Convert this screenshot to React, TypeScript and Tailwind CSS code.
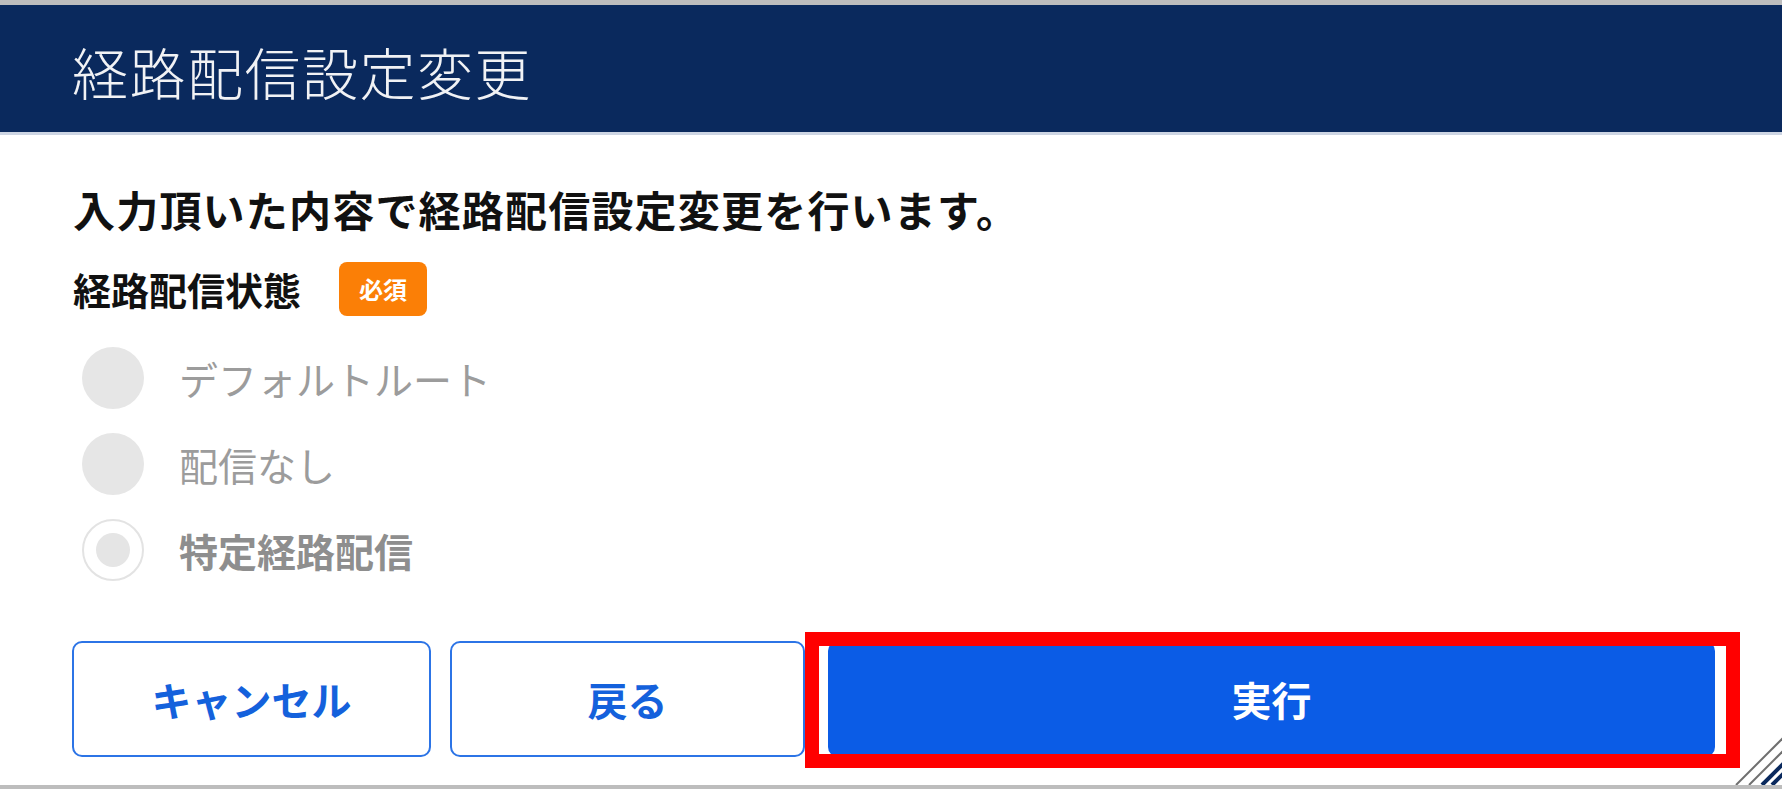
import React from 'react';

const jp = { fontFamily: '"Noto Sans CJK JP", "Noto Sans", sans-serif' };

const options = [
  { label: 'デフォルトルート', checked: false },
  { label: '配信なし', checked: false },
  { label: '特定経路配信', checked: true },
];

function Radio({ label, checked }: { label: string; checked: boolean }) {
  return (
    <div className="flex items-center h-[86px]">
      {checked ? (
        <div className="ml-[9px] w-[62px] h-[62px] rounded-full border-2 border-[#e3e3e3] bg-white flex items-center justify-center">
          <div className="w-[34px] h-[34px] rounded-full bg-[#e5e5e5]" />
        </div>
      ) : (
        <div className="ml-[9px] w-[62px] h-[62px] rounded-full bg-[#e6e6e6]" />
      )}
      <span
        className={`ml-[35px] text-[39px] leading-none ${
          checked ? 'font-bold text-[#8e8e8e]' : 'font-normal text-[#9c9c9c]'
        }`}
      >
        {label}
      </span>
    </div>
  );
}

export default function App() {
  return (
    <div
      className="relative w-full h-[789px] bg-white border-t-[5px] border-b-[4px] border-[#bdbdbd] overflow-hidden"
      style={jp}
    >
      {/* header */}
      <div className="h-[130px] bg-[#0a295d] border-b-[3px] border-[#cdd5e3] flex items-center pl-[72px]">
        <h1 className="mt-[4px] text-[56px] font-light text-[#f1f2f5] leading-none tracking-[1.5px]">
          経路配信設定変更
        </h1>
      </div>

      {/* body */}
      <div className="px-[73px]">
        <p className="mt-[49px] text-[42px] font-bold text-[#111] leading-[50px] tracking-[1.2px]">
          入力頂いた内容で経路配信設定変更を行います。
        </p>

        <div className="mt-[28px] flex items-center">
          <span className="text-[38px] font-bold text-[#111] leading-none">経路配信状態</span>
          <span className="ml-[38px] h-[54px] w-[88px] rounded-[8px] bg-[#fb7f06] text-white text-[24px] font-bold flex items-center justify-center">
            必須
          </span>
        </div>

        <div className="mt-[19px] flex flex-col">
          {options.map((o) => (
            <Radio key={o.label} label={o.label} checked={o.checked} />
          ))}
        </div>
      </div>

      {/* buttons */}
      <div className="absolute left-0 right-0 top-[636px] flex pl-[72px] pr-[67px] gap-[19px]">
        <button className="w-[359px] h-[116px] rounded-[10px] border-2 border-[#2c74e6] bg-white text-[40px] font-bold text-[#1461dc]">
          キャンセル
        </button>
        <button className="w-[355px] h-[116px] rounded-[10px] border-2 border-[#2c74e6] bg-white text-[40px] font-bold text-[#1461dc]">
          戻る
        </button>
        <button className="ml-[4px] flex-1 h-[116px] rounded-[10px] bg-[#0b5ce6] text-[40px] font-bold text-white">
          実行
        </button>
      </div>

      {/* annotation box */}
      <div className="absolute left-[805px] top-[627px] w-[935px] h-[136px] border-[14px] border-[#ff0000]" />

      {/* resize grip */}
      <svg className="absolute right-0 bottom-0" width="50" height="50" viewBox="0 0 50 50">
        <line x1="4" y1="50" x2="54" y2="0" stroke="#6f6f6f" strokeWidth="2" />
        <line x1="17" y1="50" x2="67" y2="0" stroke="#6f6f6f" strokeWidth="2" />
        <line x1="30" y1="50" x2="80" y2="0" stroke="#0a295d" strokeWidth="4" />
        <line x1="40" y1="50" x2="90" y2="0" stroke="#0a295d" strokeWidth="4" />
      </svg>
    </div>
  );
}
